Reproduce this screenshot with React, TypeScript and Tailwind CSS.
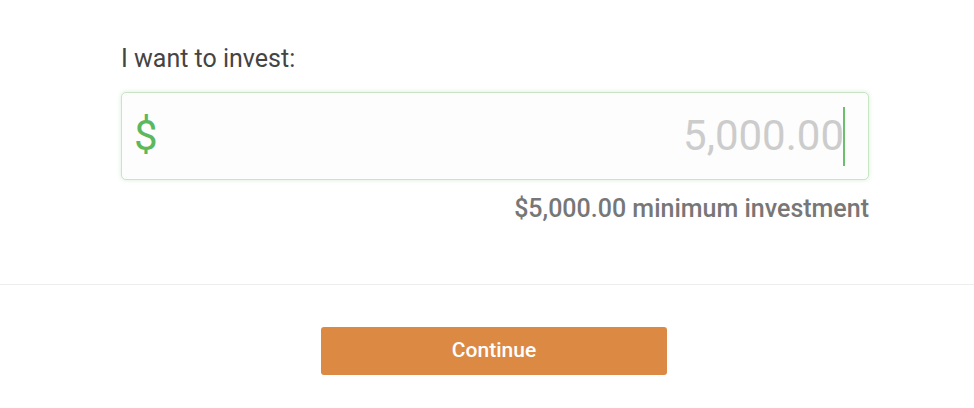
export default function App() {
  return (
    <div className="min-h-[408px] bg-white font-['Roboto',sans-serif]">
      <div className="ml-[121px] w-[748px] pt-[44px]">
        <label className="block text-[25px] leading-[30px] text-[#444]">I want to invest:</label>
        <div className="mt-[18px] flex h-[88px] items-center rounded-[5px] border border-[#c8e6c4] bg-[#fdfdfd] px-[13px] shadow-[0_0_4px_rgba(92,184,92,0.25)]">
          <span className="-ml-[1px] text-[42px] leading-none text-[#5cb85c]">$</span>
          <div className="flex flex-1 items-center justify-end pr-[10px]">
            <span className="text-[42px] leading-none text-[#cccccc]">5,000.00</span>
            <span className="-ml-[1px] h-[59px] w-[2px] bg-[#6cbf6c]" />
          </div>
        </div>
        <p className="mt-[14px] text-right text-[25px] font-medium leading-[30px] text-[#777]">
          $5,000.00 minimum investment
        </p>
      </div>
      <div className="mt-[60px] border-t border-[#eeeeee]" />
      <div className="flex justify-center pt-[42px] pl-[14px]">
        <button className="h-[48px] w-[346px] rounded-[3px] bg-[#dc8a43] text-[21px] font-medium text-white">
          Continue
        </button>
      </div>
    </div>
  );
}
